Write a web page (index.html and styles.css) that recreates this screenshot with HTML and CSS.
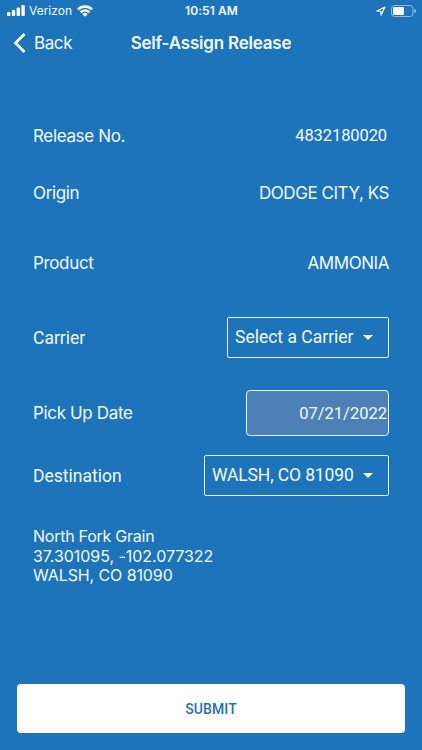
FILE: index.html
```html
<!DOCTYPE html>
<html lang="en">
<head>
    <meta charset="UTF-8">
    <meta name="viewport" content="width=device-width, initial-scale=1.0">
    <title>Self-Assign Release</title>
    <link rel="stylesheet" href="styles.css">
</head>
<body>
    <div class="status-bar">
        <div class="status-left">
            <svg class="signal" width="18" height="11" viewBox="0 0 18 11" fill="#fff">
                <rect x="0" y="7" width="3.4" height="4" rx="1"/>
                <rect x="4.8" y="5" width="3.4" height="6" rx="1"/>
                <rect x="9.6" y="2.6" width="3.4" height="8.4" rx="1"/>
                <rect x="14.4" y="0" width="3.4" height="11" rx="1"/>
            </svg>
            <span class="network">Verizon</span>
            <svg class="wifi" width="16" height="12" viewBox="0 0 16 12" fill="none" stroke="#fff" stroke-width="2.4">
                <path d="M1 4.3a10 10 0 0 1 14 0"/>
                <path d="M3.5 7.3a6.3 6.3 0 0 1 9 0"/>
                <path d="M8 11.8L5.4 9.2a3.6 3.6 0 0 1 5.2 0z" fill="#fff" stroke="none"/>
            </svg>
        </div>
        <span class="time">10:51 AM</span>
        <div class="status-right">
            <svg class="location" width="10" height="10" viewBox="0 0 10 10" fill="none" stroke="#fff" stroke-width="1.1" stroke-linejoin="round">
                <path d="M9 1L.9 4.9l4 .3.2 3.9z"/>
            </svg>
            <svg class="battery" width="25" height="12" viewBox="0 0 25 12">
                <rect x=".5" y=".5" width="21.5" height="11" rx="3" fill="none" stroke="#fff" stroke-opacity=".5"/>
                <rect x="2" y="2" width="11" height="8" rx="1.3" fill="#fff"/>
                <path d="M23.2 4v4a2 2 0 0 0 0-4z" fill="#fff" fill-opacity=".5"/>
            </svg>
        </div>
    </div>

    <header class="nav">
        <a class="back">
            <svg width="13" height="20" viewBox="0 0 13 20" fill="none" stroke="#fff" stroke-width="2.6">
                <path d="M11.5 1L2.5 10l9 9"/>
            </svg>
            <span class="back-text">Back</span>
        </a>
        <h1>Self-Assign Release</h1>
    </header>

    <main class="form">
        <div class="row release">
            <span class="label">Release No.</span>
            <span class="value number">4832180020</span>
        </div>
        <div class="row origin">
            <span class="label">Origin</span>
            <span class="value city">DODGE CITY, KS</span>
        </div>
        <div class="row product">
            <span class="label">Product</span>
            <span class="value item">AMMONIA</span>
        </div>
        <div class="row carrier">
            <span class="label alt">Carrier</span>
            <button class="select"><span class="carrier-text">Select a Carrier</span><i class="arrow"></i></button>
        </div>
        <div class="row pickup">
            <span class="label">Pick Up Date</span>
            <div class="date">07/21/2022</div>
        </div>
        <div class="row destination">
            <span class="label alt">Destination</span>
            <button class="select wide"><span class="place-text">WALSH, CO 81090</span><i class="arrow"></i></button>
        </div>
        <address>
            <div>North Fork Grain</div>
            <div class="coords">37.301095, -102.077322</div>
            <div class="town">WALSH, CO 81090</div>
        </address>
    </main>

    <button class="submit">SUBMIT</button>
</body>
</html>
```

FILE: styles.css
```css
* {
    box-sizing: border-box;
}
body {
    margin: 0;
    height: 750px;
    display: flex;
    flex-direction: column;
    background: #1e74bb;
    color: #f2faff;
    font-family: Inter, 'Liberation Sans', sans-serif;
    overflow: hidden;
}
button {
    font-family: Roboto, sans-serif;
    margin: 0;
}
.status-bar {
    display: grid;
    grid-template-columns: 1fr auto 1fr;
    align-items: center;
    height: 21px;
    padding: 0 6px 0 7px;
}
.status-left,
.status-right {
    display: flex;
    align-items: center;
}
.status-right {
    justify-content: flex-end;
    gap: 5px;
}
.network {
    font-size: 12px;
    margin: 0 5px 0 4px;
}
.time {
    font-size: 12px;
    font-weight: 600;
    letter-spacing: 0.1px;
}
.nav {
    display: grid;
    grid-template-columns: 1fr auto 1fr;
    align-items: center;
    height: 43px;
    padding: 0 13px;
}
.back {
    display: flex;
    align-items: center;
    gap: 8px;
    font-size: 17px;
    letter-spacing: -0.4px;
}
h1 {
    margin: 0;
    font-size: 17px;
    font-weight: 600;
    letter-spacing: -0.2px;
}
.form {
    padding: 62px 33px 0;
}
.row {
    display: flex;
    justify-content: space-between;
    align-items: center;
    height: 20px;
    font-size: 17px;
    line-height: 20px;
}
.label,
.value {
    letter-spacing: -0.35px;
}
.city,
.item {
    letter-spacing: -0.45px;
}
.alt {
    font-family: Roboto, sans-serif;
    font-size: 17.5px;
    letter-spacing: 0;
}
.number {
    font-family: Roboto, sans-serif;
    font-size: 16.5px;
    letter-spacing: -0.1px;
    margin-right: 2px;
}
.origin {
    margin-top: 37px;
}
.product {
    margin-top: 50px;
}
.carrier {
    height: 41px;
    margin-top: 44px;
}
.pickup {
    height: 46px;
    margin-top: 32px;
}
.destination {
    height: 41px;
    margin-top: 19px;
}
.select {
    display: flex;
    align-items: center;
    justify-content: space-between;
    width: 162px;
    height: 41px;
    padding: 0 15px 1px 7px;
    background: none;
    border: 1px solid #e8f6ff;
    border-radius: 2px;
    color: #f2faff;
    font-size: 17.5px;
}
.wide {
    width: 185px;
    letter-spacing: -0.13px;
}
.arrow {
    border: 5.5px solid transparent;
    border-top-color: #fff;
    border-bottom: 0;
}
.date {
    width: 143px;
    height: 46px;
    padding-right: 1px;
    border: 1px solid #e8f6ff;
    border-radius: 4px;
    background: #4d80b7;
    font-family: Roboto, sans-serif;
    font-size: 16.5px;
    line-height: 45px;
    text-align: right;
}
address {
    margin-top: 31px;
    font-size: 16px;
    font-style: normal;
    line-height: 19.5px;
    letter-spacing: -0.25px;
}
.coords {
    letter-spacing: -0.05px;
}
.town {
    letter-spacing: -0.1px;
}
.submit {
    height: 49px;
    margin: auto 17px 17px;
    padding-top: 2px;
    border: 0;
    border-radius: 4px;
    background: #fff;
    color: #1e6fb5;
    font-size: 14px;
    font-weight: 500;
    letter-spacing: 0.1px;
}
```
